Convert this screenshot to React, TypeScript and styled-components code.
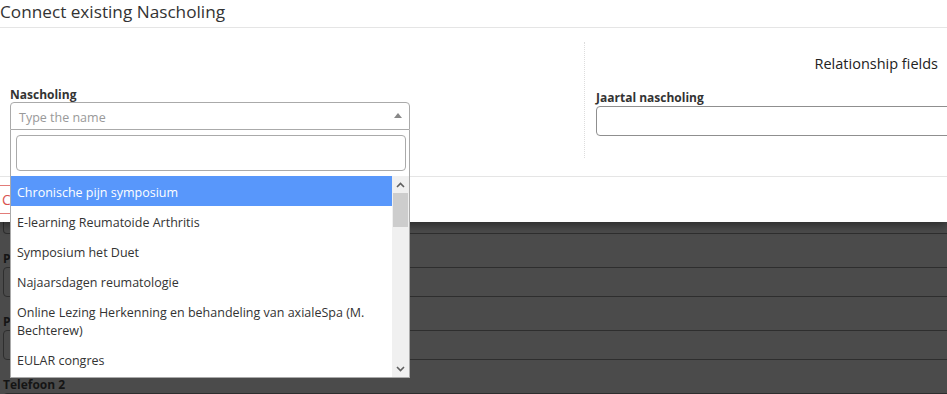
import React from "react";
import styled, { createGlobalStyle } from "styled-components";

const GlobalStyle = createGlobalStyle`
  html, body { margin: 0; padding: 0; background: #4b4b4b; }
  body { font-family: "Open Sans", "Noto Sans", Arial, sans-serif; color: #333; overflow: hidden; }
  * { box-sizing: border-box; }
`;

const Page = styled.div`
  width: 947px;
  height: 394px;
  overflow: hidden;
  display: flex;
  flex-direction: column;
`;

const Modal = styled.div`
  position: relative;
  z-index: 2;
  background: #fff;
  box-shadow: 0 3px 9px rgba(0, 0, 0, 0.45);
`;

const Header = styled.div`
  height: 28px;
  border-bottom: 1px solid #e5e5e5;
`;

const Title = styled.h4`
  margin: 0;
  font-size: 17.2px;
  font-weight: 400;
  line-height: 23px;
  color: #333;
`;

const Body = styled.div`
  padding: 14px 0 18px;
  display: grid;
  grid-template-columns: 584px 1fr;
  height: 148px;
`;

const LeftCol = styled.div`
  padding: 46px 0 0 10px;
`;

const RightCol = styled.div`
  border-left: 1px dotted #ddd;
  padding: 12px 9px 0 11px;
`;

const SectionTitle = styled.div`
  text-align: right;
  font-size: 14.5px;
  line-height: 20px;
  color: #222;
  margin-bottom: 17px;
`;

const Label = styled.label<{ $gap?: number }>`
  display: block;
  font-size: 12px;
  font-weight: 700;
  line-height: 14px;
  color: #333;
  margin-bottom: ${(p) => p.$gap ?? 0}px;
`;

const TextInput = styled.div`
  height: 30px;
  margin-right: -40px;
  border: 1px solid #8f8f8f;
  border-radius: 4px;
  background: #fff;
`;

const SelectWrap = styled.div`
  position: relative;
  width: 400px;
`;

const SelectBox = styled.div`
  height: 28px;
  border: 1px solid #aaa;
  border-radius: 4px 4px 0 0;
  display: flex;
  align-items: center;
  justify-content: space-between;
  padding: 2px 7px 0 8px;
  background: #fff;
`;

const Placeholder = styled.span`
  font-size: 12.5px;
  color: #999;
`;

const Caret = styled.span`
  width: 0;
  height: 0;
  border-left: 4px solid transparent;
  border-right: 4px solid transparent;
  border-bottom: 5px solid #888;
  margin-top: -4px;
`;

const Dropdown = styled.div`
  position: absolute;
  top: 100%;
  left: 0;
  width: 400px;
  background: #fff;
  border: 1px solid #aaa;
  border-top: none;
  z-index: 5;
`;

const SearchArea = styled.div`
  padding: 5px 3px 5px 5px;
`;

const SearchField = styled.div`
  height: 36px;
  border: 1px solid #aaa;
  border-radius: 4px;
`;

const ListArea = styled.div`
  display: flex;
  height: 201px;
  overflow: hidden;
`;

const Options = styled.ul`
  flex: 1;
  margin: 0;
  padding: 0;
  list-style: none;
`;

const Option = styled.li<{ $active?: boolean }>`
  padding: 8px 6px 4px;
  font-size: 12.5px;
  line-height: 18px;
  color: ${(p) => (p.$active ? "#fff" : "#333")};
  background: ${(p) => (p.$active ? "#5897fb" : "#fff")};
`;

const ScrollBar = styled.div`
  width: 17px;
  background: #f0f0f0;
  display: flex;
  flex-direction: column;
`;

const ScrollArrow = styled.div`
  height: 17px;
  display: flex;
  align-items: center;
  justify-content: center;
`;

const Thumb = styled.div`
  height: 34px;
  margin: 0 1px;
  background: #cdcdcd;
`;

const Track = styled.div`
  flex: 1;
`;

const Footer = styled.div`
  border-top: 1px solid #e5e5e5;
  height: 46px;
  padding-top: 8px;
`;

const CancelButton = styled.button`
  margin-left: -11px;
  height: 29px;
  padding: 0 12px;
  border: 1px solid #e27c79;
  border-radius: 0;
  background: #fff;
  color: #d9534f;
  font-family: inherit;
  font-size: 14px;
`;

const Dimmed = styled.div`
  flex: 1;
  background: #4b4b4b;
  padding-left: 3px;
`;

const DimInput = styled.div<{ $h: number }>`
  height: ${(p) => p.$h}px;
  margin-right: -10px;
  border: 1px solid #2e2e2e;
  border-radius: 4px;
  background: #4b4b4b;
`;

const TopInput = styled(DimInput)`
  border-top: none;
  border-radius: 0 0 4px 4px;
`;

const DimLabel = styled.div`
  height: 33px;
  padding-top: 18px;
  font-size: 12px;
  font-weight: 700;
  line-height: 14px;
  color: #151515;
`;

const Chevron = ({ up }: { up?: boolean }) => (
  <svg width="9" height="6" viewBox="0 0 9 6">
    <polyline
      points={up ? "1,5 4.5,1.5 8,5" : "1,1 4.5,4.5 8,1"}
      fill="none"
      stroke="#606060"
      strokeWidth="1.6"
    />
  </svg>
);

const options = [
  "Chronische pijn symposium",
  "E-learning Reumatoide Arthritis",
  "Symposium het Duet",
  "Najaarsdagen reumatologie",
  "Online Lezing Herkenning en behandeling van axialeSpa (M. Bechterew)",
  "EULAR congres",
  "ACR congres",
];

export default function App() {
  return (
    <Page>
      <GlobalStyle />
      <Modal>
        <Header>
          <Title>Connect existing Nascholing</Title>
        </Header>
        <Body>
          <LeftCol>
            <Label>Nascholing</Label>
            <SelectWrap>
              <SelectBox>
                <Placeholder>Type the name</Placeholder>
                <Caret />
              </SelectBox>
              <Dropdown>
                <SearchArea>
                  <SearchField />
                </SearchArea>
                <ListArea>
                  <Options>
                    {options.map((o, i) => (
                      <Option key={o} $active={i === 0}>
                        {o}
                      </Option>
                    ))}
                  </Options>
                  <ScrollBar>
                    <ScrollArrow>
                      <Chevron up />
                    </ScrollArrow>
                    <Thumb />
                    <Track />
                    <ScrollArrow>
                      <Chevron />
                    </ScrollArrow>
                  </ScrollBar>
                </ListArea>
              </Dropdown>
            </SelectWrap>
          </LeftCol>
          <RightCol>
            <SectionTitle>Relationship fields</SectionTitle>
            <Label $gap={1}>Jaartal nascholing</Label>
            <TextInput />
          </RightCol>
        </Body>
        <Footer>
          <CancelButton>Cancel</CancelButton>
        </Footer>
      </Modal>
      <Dimmed>
        <TopInput $h={12} />
        <DimLabel>Postcode</DimLabel>
        <DimInput $h={30} />
        <DimLabel>Plaats</DimLabel>
        <DimInput $h={30} />
        <DimLabel>Telefoon 2</DimLabel>
        <DimInput $h={30} />
      </Dimmed>
    </Page>
  );
}
